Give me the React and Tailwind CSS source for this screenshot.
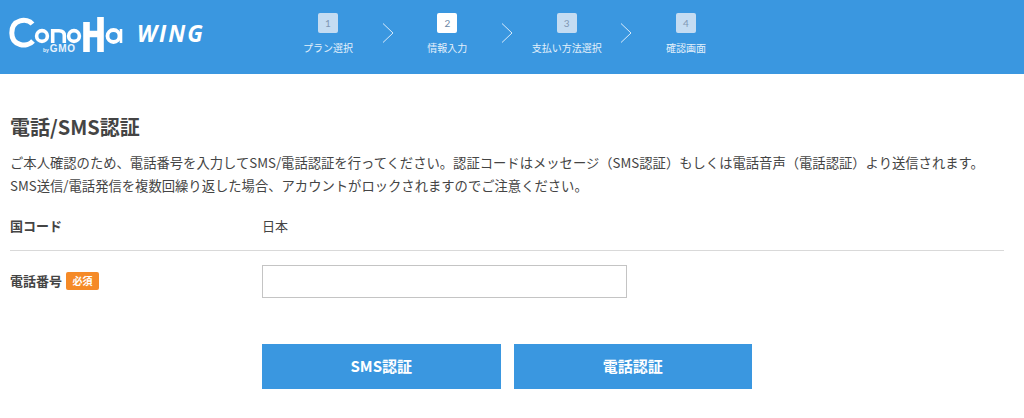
const CJK = "font-['Noto_Sans_CJK_JP','Noto_Sans',sans-serif]";

const steps = [
  { n: 1, label: 'プラン選択' },
  { n: 2, label: '情報入力', active: true },
  { n: 3, label: '支払い方法選択' },
  { n: 4, label: '確認画面' },
];

const Logo = () => (
  <div className="relative h-[40px] w-[116px]">
    <svg viewBox="0 0 116 40" className="h-full w-full" fill="none" stroke="#fff" strokeLinecap="butt">
      <path d="M24.5 9 C19 2.5 3.8 4 3.8 18 C3.8 31 19 33 25 26" strokeWidth="5" />
      <circle cx="34" cy="21" r="5.4" strokeWidth="3.6" />
      <path d="M44.7 28 V15.7 H51 Q56.3 15.7 56.3 20.5 V28" strokeWidth="3.6" />
      <circle cx="66" cy="21" r="5.4" strokeWidth="3.6" />
      <path d="M78.5 7 V37 M92.5 2 V37 M78.5 19 H92.5" strokeWidth="6.6" />
      <circle cx="105.5" cy="21" r="6" strokeWidth="3.8" />
      <path d="M113 14 V28" strokeWidth="2.6" />
    </svg>
    <span className="absolute left-[35px] top-[29px] font-['Liberation_Sans',sans-serif] text-[10px] font-bold leading-[10px] tracking-[0.6px] text-[#e6f2fc]">
      <span className="mr-[1px] text-[5px] tracking-normal">by</span>GMO
    </span>
  </div>
);

const Step = ({ n, label, active }) => (
  <div className="flex w-[100px] flex-col items-center">
    <div className={`flex h-[20px] w-[20px] items-center justify-center rounded-[2px] font-['Lato',sans-serif] text-[10px] ${active ? 'bg-white text-[#6d87a5]' : 'bg-[#c4dcf2] text-[#7f97b4]'}`}>
      {n}
    </div>
    <div className="mt-[7px] whitespace-nowrap text-[10px] leading-[15px] text-[#e3f0fb]">{label}</div>
  </div>
);

const Chevron = () => (
  <div className="flex w-[19.33px] justify-center pt-[10px]">
    <svg width="12" height="20" viewBox="0 0 12 20" fill="none" stroke="#d9ebfa" strokeWidth="1">
      <path d="M1 0.5 L11 10 L1 19.5" />
    </svg>
  </div>
);

export default function App() {
  return (
    <div className={`h-[418px] w-[1024px] overflow-hidden bg-white text-[#444] ${CJK}`}>
      <header className="flex h-[74px] bg-[#3a97e0]">
        <div className="flex w-[278px] items-start pl-[8px] pt-[15px]">
          <Logo />
          <span className="ml-[13px] mt-[7px] font-['Open_Sans',sans-serif] text-[22.5px] font-bold italic leading-[24px] tracking-[2px] text-white">WING</span>
        </div>
        <div className="flex pt-[13px]">
          {steps.map((s, i) => (
            <div key={s.n} className="flex">
              <Step {...s} />
              {i < steps.length - 1 && <Chevron />}
            </div>
          ))}
        </div>
      </header>

      <main className="px-[10px]">
        <h1 className="mt-[39px] text-[20px] font-bold leading-[28px]">電話/SMS認証</h1>
        <p className="mt-[10px] whitespace-nowrap text-[13.32px] leading-[23px]">
          ご本人確認のため、電話番号を入力してSMS/電話認証を行ってください。認証コードはメッセージ（SMS認証）もしくは電話音声（電話認証）より送信されます。
          <br />
          SMS送信/電話発信を複数回繰り返した場合、アカウントがロックされますのでご注意ください。
        </p>

        <div className="mr-[10px] mt-[4px]">
          <div className="flex h-[50px] items-center border-b border-[#d9d9d9] text-[13px]">
            <div className="w-[252px] font-bold">国コード</div>
            <div>日本</div>
          </div>
          <div className="flex items-center pt-[14px]">
            <div className="flex w-[252px] items-center gap-[4px] pb-[2px]">
              <span className="text-[13px] font-bold">電話番号</span>
              <span className="flex h-[18px] w-[33px] items-center justify-center rounded-[2px] bg-[#f58a27] text-[10px] font-bold text-white">必須</span>
            </div>
            <input type="text" className="h-[33px] w-[365px] border border-[#c4c4c4] bg-white" />
          </div>
        </div>

        <div className="ml-[252px] mt-[46px] flex gap-[13px]">
          <button className="h-[45px] w-[238.5px] bg-[#3a97e0] text-[15px] font-bold text-white">SMS認証</button>
          <button className="h-[45px] w-[238.5px] bg-[#3a97e0] text-[15px] font-bold text-white">電話認証</button>
        </div>
      </main>
    </div>
  );
}
